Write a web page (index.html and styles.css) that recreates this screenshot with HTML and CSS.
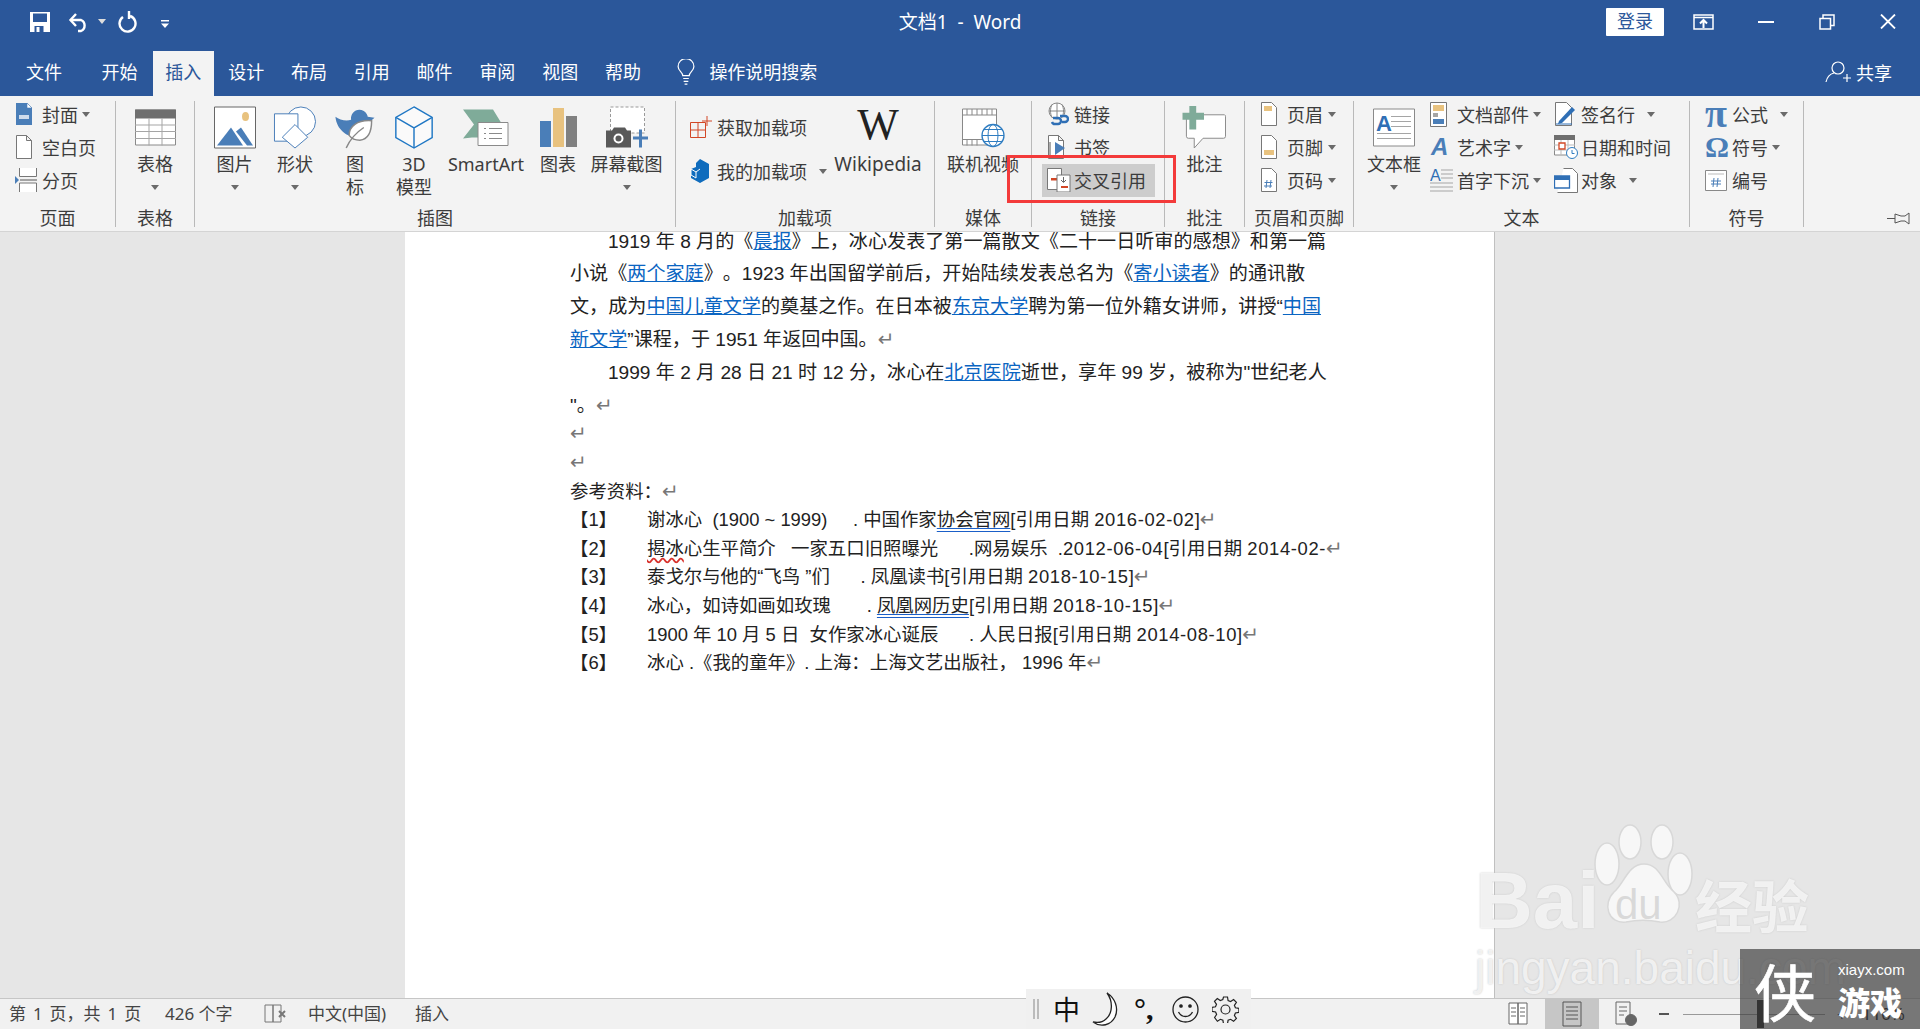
FILE: index.html
```html
<!DOCTYPE html>
<html lang="zh-CN">
<head>
<meta charset="utf-8">
<title>文档1 - Word</title>
<link rel="stylesheet" href="styles.css">
</head>
<body>
<div class="app">
  <header class="titlebar">
    <div class="qat">
      <svg class="q-save" width="20" height="20" viewBox="0 0 20 20"><path d="M0 0h20v20H0z" fill="#fff"/><path d="M3 1.500h14v8.500H3z" fill="#2b579a"/><path d="M4.500 14h9v6h-9z" fill="#2b579a"/><path d="M6.500 15h3v5h-3z" fill="#fff"/></svg>
      <svg class="q-undo" width="22" height="22" viewBox="0 0 22 22" fill="none" stroke="#fff" stroke-width="2.400"><path d="M3 9h10a6 6 0 0 1 0 11h-3"/><path d="M8 3 2.500 9 8 15"/></svg>
      <span class="caret-w q-c1"></span>
      <svg class="q-redo" width="20" height="22" viewBox="0 0 20 22" fill="none" stroke="#fff" stroke-width="2.400"><path d="M12 5a8 8 0 1 1-7 1"/><path d="M11 0v8"/></svg>
      <svg class="q-more" width="9" height="9" viewBox="0 0 9 9" fill="#fff"><path d="M0 0h8v1.500H0zM0 3.500h8L4 8z"/></svg>
    </div>
    <div class="doc-title">文档1&nbsp;&nbsp;-&nbsp;&nbsp;Word</div>
    <div class="winctl">
      <span class="login">登录</span>
      <svg class="w-opt" width="21" height="16" viewBox="0 0 21 16" fill="none" stroke="#fff" stroke-width="1.500"><path d="M1 1h19v14H1zM1 3.500h19"/><path d="M10.500 14V7M7 9.500l3.500-3.500 3.500 3.500" stroke-width="2"/></svg>
      <svg class="w-min" width="16" height="2" viewBox="0 0 16 2"><path d="M0 0h16v2H0z" fill="#fff"/></svg>
      <svg class="w-max" width="16" height="16" viewBox="0 0 16 16" fill="none" stroke="#fff" stroke-width="1.500"><path d="M1 4.500h10.500V15H1zM4 4V1h11v10.500h-3.500"/></svg>
      <svg class="w-close" width="16" height="15" viewBox="0 0 16 15" fill="none" stroke="#fff" stroke-width="1.800"><path d="M1 .5l14 14M15 .5l-14 14"/></svg>
    </div>
  </header>

  <nav class="tabs">
    <span class="tab tab-file">文件</span>
    <span class="tab">开始</span>
    <span class="tab tab-on">插入</span>
    <span class="tab">设计</span>
    <span class="tab">布局</span>
    <span class="tab">引用</span>
    <span class="tab">邮件</span>
    <span class="tab">审阅</span>
    <span class="tab">视图</span>
    <span class="tab">帮助</span>
    <span class="tell">
      <svg width="18" height="26" viewBox="0 0 19 28" fill="none" stroke="#fff" stroke-width="1.300"><path d="M6 18c0-4-5-5-5-10a8.500 8.500 0 0 1 17 0c0 5-5 6-5 10z"/><path d="M6.500 21h6M7 24h5M8 27h3"/></svg>
      操作说明搜索
    </span>
    <span class="share">
      <svg width="28" height="22" viewBox="0 0 28 22" fill="none" stroke="#fff" stroke-width="1.200"><circle cx="13" cy="7" r="6"/><path d="M1 21c1-5 4-8 8-9M22 13v8M18 17h8"/></svg>
      共享
    </span>
  </nav>

  <section class="ribbon">
    <div class="group g-page">
      <div class="body stack">
        <div class="small"><span class="ic"><svg width="18" height="22" viewBox="0 0 18 22"><path d="M1 0h11l5 5v17H1z" fill="#4a7eb8"/><path d="M12 0v5h5z" fill="#fff" stroke="#4a7eb8" stroke-width=".6"/><path d="M4 12h10v4H4z" fill="#cfdcec"/></svg></span>封面<i class="caret c4"></i></div>
        <div class="small"><span class="ic"><svg width="18" height="24" viewBox="0 0 18 24" fill="#fff" stroke="#777"><path d="M1.500 .5h10l5 5v18h-15zM11.500 .5v5h5"/></svg></span>空白页</div>
        <div class="small"><span class="ic"><svg width="24" height="24" viewBox="0 0 24 24"><path d="M4.500 0v8.500h17V0M4.500 24v-9h17V24" fill="#fff" stroke="#777"/><path d="M0 8l4 4-4 4z" fill="#4a7eb8"/><path d="M5 12h17" stroke="#555"/></svg></span>分页</div>
      </div>
      <div class="glabel">页面</div>
    </div>
    <span class="sep"></span>

    <div class="group g-table">
      <div class="body row">
        <div class="big w-full">
          <svg class="bi" width="41" height="36" viewBox="0 0 41 36"><path d="M.5.500h40v35H.5z" fill="#fff" stroke="#8a8a8a"/><path d="M0 0h41v9H0z" fill="#6e6e6e"/><path d="M0 15.500h41M0 22h41M0 29h41M14 9v27M27 9v27" stroke="#a5a5a5"/></svg>
          <span class="bl">表格</span><i class="caret"></i>
        </div>
      </div>
      <div class="glabel">表格</div>
    </div>
    <span class="sep"></span>

    <div class="group g-illus">
      <div class="body row">
        <div class="big b59">
          <svg class="bi" width="42" height="42" viewBox="0 0 42 42"><path d="M.5.500h41v41H.5z" fill="#fff" stroke="#666"/><ellipse cx="31.500" cy="10" rx="3.500" ry="4.500" fill="#e8c27f"/><path d="M3 39 17 21l12 18z" fill="#4a7eb8"/><path d="M22 25l5-4 12 18H33z" fill="#4a7eb8"/></svg>
          <span class="bl">图片</span><i class="caret"></i>
        </div>
        <div class="big b62">
          <svg class="bi" width="44" height="44" viewBox="0 0 44 44" fill="#fff" stroke="#4a7eb8"><circle cx="28" cy="16" r="15"/><path d="M1 8h24v28H1z"/><path d="M22 19l13 13-13 11L9 32z"/></svg>
          <span class="bl">形状</span><i class="caret"></i>
        </div>
        <div class="big b58">
          <svg class="bi" width="42" height="44" viewBox="0 0 42 44"><path d="M17 14c-1-7 6-13 13-9 3 2 4 5 4 6l7 1-7 6c0 8-5 14-11 14-10 0-21-8-22-21 4 3 11 5 16 3z" fill="#4a7eb8"/><path d="M15 30c0-9 8-16 23-15 0 12-4 19-12 20-4 0-8-1-11-5z" fill="#fff" stroke="#888" stroke-width="1.500"/><path d="M12 43c3-7 9-15 18-21" fill="none" stroke="#888" stroke-width="1.500"/></svg>
          <span class="bl">图<br>标</span>
        </div>
        <div class="big b60">
          <svg class="bi" width="40" height="45" viewBox="0 0 40 45" fill="#fafafa" stroke="#1f77c4" stroke-width="1.500"><path d="M20 1 39 12v21L20 44 1 33V12z"/><path d="M1 12l19 11 19-11M20 23v21"/></svg>
          <span class="bl">3D<br>模型</span>
        </div>
        <div class="big b84">
          <svg class="bi" width="46" height="38" viewBox="0 0 46 38"><path d="M0 1h30l8 13v15H9l-9 1 11-14z" fill="#7fab99"/><path d="M15 18h30v23H15z" transform="translate(0 -4)" fill="#fff" stroke="#8a8a8a"/><path d="M21 20h2M26 20h13M21 25h2M26 25h13M21 30h2M26 30h13" stroke="#8a8a8a"/></svg>
          <span class="bl">SmartArt</span>
        </div>
        <div class="big b60">
          <svg class="bi" width="37" height="39" viewBox="0 0 37 39"><path d="M0 13h11v26H0z" fill="#4a7eb8"/><path d="M13 0h11v39H13z" fill="#e8c27f"/><path d="M26 8h11v31H26z" fill="#808080"/></svg>
          <span class="bl">图表</span>
        </div>
        <div class="big b77">
          <svg class="bi" width="42" height="42" viewBox="0 0 42 42"><path d="M4.500 .5h34v26h-34z" fill="#fff" stroke="#999" stroke-dasharray="3 2"/><path d="M0 24h6l2-3h11l2 3h4v17H0z" fill="#595959"/><circle cx="12.500" cy="32" r="5" fill="#fff"/><circle cx="12.500" cy="32" r="3" fill="#595959"/><path d="M33 23h3v7h6v3h-6v8h-3v-8h-6v-3h6z" fill="#4a7eb8"/></svg>
          <span class="bl">屏幕截图</span><i class="caret"></i>
        </div>
      </div>
      <div class="glabel">插图</div>
    </div>
    <span class="sep"></span>

    <div class="group g-addin">
      <div class="body row">
        <div class="addin-col">
          <div class="small tall"><span class="ic"><svg width="22" height="22" viewBox="0 0 22 22" fill="none" stroke="#d24726"><path d="M.5 6.500h15v15H.5zM8 6.500v15M.5 14h15"/><path d="M17 0v10M12 5h10"/></svg></span>获取加载项</div>
          <div class="small tall"><span class="ic"><svg width="20" height="25" viewBox="0 0 20 25"><path d="M10 0l9 5v14l-9 5-9-5v-9l5-2V4z" fill="#0f6cbd"/><path d="M1 10l5 3v6l-5-3zM6 13l4-3" stroke="#fff" fill="none"/></svg></span>我的加载项<i class="caret c12"></i></div>
        </div>
        <div class="big b84 wiki">
          <span class="wiki-w">W</span>
          <span class="bl">Wikipedia</span>
        </div>
      </div>
      <div class="glabel">加载项</div>
    </div>
    <span class="sep"></span>

    <div class="group g-media">
      <div class="body row">
        <div class="big w-full">
          <svg class="bi" width="43" height="38" viewBox="0 0 43 38"><path d="M.5.500h34v36H.5z" fill="#fff" stroke="#888"/><path d="M.5 6.500h34M.5 31h34M5 .5v6M10 .5v6M15 .5v6M20 .5v6M25 .5v6M30 .5v6M5 31v6M10 31v6M15 31v6" stroke="#888"/><circle cx="31" cy="27" r="11" fill="#fff" stroke="#2f7dc1" stroke-width="1.300"/><ellipse cx="31" cy="27" rx="5" ry="11" fill="none" stroke="#2f7dc1"/><path d="M20 27h22M22 21h18M22 33h18" stroke="#2f7dc1"/></svg>
          <span class="bl">联机视频</span>
        </div>
      </div>
      <div class="glabel">媒体</div>
    </div>
    <span class="sep"></span>

    <div class="group g-links">
      <div class="body stack">
        <div class="small"><span class="ic"><svg width="22" height="24" viewBox="0 0 22 24"><circle cx="10" cy="9" r="8" fill="#fff" stroke="#888"/><path d="M2 9h16M10 1v16M5 2.500c-2 4-2 9 0 13M15 2.500c2 4 2 9 0 13" stroke="#888" fill="none"/><path d="M6 16h5a3 3 0 0 1 0 6H8a3 3 0 0 1-3-2M13 14h5a3 3 0 0 1 0 6h-3" fill="none" stroke="#2f6fb5" stroke-width="2.400"/></svg></span>链接</div>
        <div class="small"><span class="ic"><svg width="20" height="24" viewBox="0 0 20 24"><path d="M1.500 .5h10l5 5v18h-15zM11.500 .5v5h5" fill="#fff" stroke="#777"/><path d="M8 7l10 6-10 7z" fill="#4a7eb8"/><path d="M3 7v13" stroke="#555"/></svg></span>书签</div>
        <div class="small small-on"><span class="ic"><svg width="24" height="24" viewBox="0 0 24 24"><path d="M.5.500h14v21H.5z" fill="#fff" stroke="#777"/><path d="M4 10h7v2.500H4z" fill="#d24726"/><path d="M10 7h13v17H10z" fill="#fff" stroke="#777"/><path d="M16.500 9v5M14 12l2.500 2.500L19 12" fill="none" stroke="#666"/><path d="M14 18h7v2h-7z" fill="#d24726"/></svg></span>交叉引用</div>
      </div>
      <div class="glabel">链接</div>
    </div>
    <span class="sep"></span>

    <div class="group g-comment">
      <div class="body row">
        <div class="big w-full">
          <svg class="bi comment-ic" width="45" height="44" viewBox="0 0 45 44"><path d="M6 9h37a2 2 0 0 1 1 2v20a2 2 0 0 1-2 2H21l-9 10v-10H6a2 2 0 0 1-2-2V11z" fill="#fff" stroke="#8a8a8a"/><path d="M7 0h7v7h8v7h-8v10H7V14H0V7h7z" fill="#7fab99"/></svg>
          <span class="bl">批注</span>
        </div>
      </div>
      <div class="glabel">批注</div>
    </div>
    <span class="sep"></span>

    <div class="group g-hf">
      <div class="body stack">
        <div class="small"><span class="ic"><svg width="18" height="24" viewBox="0 0 18 24"><path d="M1.500 .5h10l5 5v18h-15z" fill="#fff" stroke="#777"/><path d="M4 4h8v5H4z" fill="#e8c27f"/></svg></span>页眉<i class="caret c5"></i></div>
        <div class="small"><span class="ic"><svg width="18" height="24" viewBox="0 0 18 24"><path d="M1.500 .5h10l5 5v18h-15z" fill="#fff" stroke="#777"/><path d="M4 15h10v5H4z" fill="#e8c27f"/></svg></span>页脚<i class="caret c5"></i></div>
        <div class="small"><span class="ic"><svg width="18" height="24" viewBox="0 0 18 24"><path d="M1.500 .5h10l5 5v18h-15z" fill="#fff" stroke="#777"/><path d="M7 12l-1 8M11 12l-1 8M4.500 14.500h8M4 18h8" stroke="#4a7eb8"/></svg></span>页码<i class="caret c5"></i></div>
      </div>
      <div class="glabel">页眉和页脚</div>
    </div>
    <span class="sep"></span>

    <div class="group g-text">
      <div class="body row">
        <div class="big b72">
          <svg class="bi" width="42" height="38" viewBox="0 0 42 38"><path d="M.5.500h41v37H.5z" fill="#fff" stroke="#8a8a8a"/><text x="3" y="22" class="ic-letter">A</text><path d="M18 8h20M18 13h20M18 18h20M4 25h34M4 30h34" stroke="#a5a5a5"/></svg>
          <span class="bl">文本框</span><i class="caret"></i>
        </div>
        <div class="col-2">
          <div class="small nopad"><span class="ic"><svg width="18" height="25" viewBox="0 0 18 25"><path d="M.5.500h16v24H.5z" fill="#fff" stroke="#777"/><path d="M3 3h11v6H3z" fill="#e8c27f"/><path d="M3 11h5v4H3z" fill="#a5a5a5"/><path d="M3 17h11v5H3z" fill="#4a7eb8"/></svg></span>文档部件<i class="caret c4"></i></div>
          <div class="small nopad"><span class="ic"><svg width="18" height="24" viewBox="0 0 18 24"><text x="1" y="20" class="ic-a">A</text></svg></span>艺术字<i class="caret c4"></i></div>
          <div class="small nopad"><span class="ic ic-drop"><svg width="24" height="24" viewBox="0 0 24 24"><text x="0" y="13" class="ic-b">A</text><path d="M11 2h12M11 6h12M11 10h12M0 15h23M0 19h23M0 23h23" stroke="#a5a5a5"/></svg></span>首字下沉<i class="caret c4"></i></div>
        </div>
        <div class="col-3">
          <div class="small nopad"><span class="ic"><svg width="22" height="24" viewBox="0 0 22 24"><path d="M1.500 .5h11l5 5v18h-16z" fill="#fff" stroke="#777"/><path d="M5 19 18 5l3 3L8 21l-4 1z" fill="#2f6fb5"/><path d="M2 22h16" stroke="#2f6fb5"/></svg></span>签名行<i class="caret c12"></i></div>
          <div class="small nopad"><span class="ic"><svg width="24" height="24" viewBox="0 0 24 24"><path d="M.5 1h20v19H.5z" fill="#fff" stroke="#8a8a8a"/><path d="M0 0h21v5H0z" fill="#6e6e6e"/><path d="M7 5v15M14 5v15M0 10h21M0 15h21" stroke="#bbb"/><path d="M5 8h6v6H5z" fill="#fff" stroke="#d24726" stroke-width="1.300"/><circle cx="18" cy="18" r="5.500" fill="#fff" stroke="#2f7dc1"/><path d="M18 15v3.500h2.500" fill="none" stroke="#2f7dc1"/></svg></span>日期和时间</div>
          <div class="small nopad"><span class="ic"><svg width="24" height="25" viewBox="0 0 24 25"><path d="M9.500 .5h9l5 5v19h-20" fill="#fff" stroke="#777"/><path d="M.5 8h15v12H.5z" fill="#fff" stroke="#2f6fb5" stroke-width="1.300"/><path d="M0 8h16v4H0z" fill="#2f6fb5"/></svg></span>对象<i class="caret c12"></i></div>
        </div>
      </div>
      <div class="glabel">文本</div>
    </div>
    <span class="sep"></span>

    <div class="group g-sym">
      <div class="body stack">
        <div class="small"><span class="ic sym sym-pi">π</span>公式<i class="caret c12"></i></div>
        <div class="small"><span class="ic sym">Ω</span>符号<i class="caret c4"></i></div>
        <div class="small"><span class="ic"><svg width="22" height="21" viewBox="0 0 22 21"><path d="M.5.500h21v20H.5z" fill="#fff" stroke="#888"/><path d="M3 4h16" stroke="#bbb"/><path d="M9 8l-1 9M13 8l-1 9M6 11h10M6 14h10" stroke="#4a7eb8"/></svg></span>编号</div>
      </div>
      <div class="glabel">符号</div>
    </div>
    <span class="sep"></span>

    <div class="pin-cell">
      <svg width="23" height="15" viewBox="0 0 23 15" fill="none" stroke="#555"><path d="M0 7.500h8M8 3l6 2h4l4-3v11l-4-3h-4l-6 2z"/></svg>
    </div>
  </section>

  <main class="workspace">
    <article class="page">
      <div class="body-text">
        <div class="pline indent">1919 年 8 月的《<a class="lnk">晨报</a>》上，冰心发表了第一篇散文《二十一日听审的感想》和第一篇</div>
        <div class="pline">小说《<a class="lnk">两个家庭</a>》。1923 年出国留学前后，开始陆续发表总名为《<a class="lnk">寄小读者</a>》的通讯散</div>
        <div class="pline">文，成为<a class="lnk">中国儿童文学</a>的奠基之作。在日本被<a class="lnk">东京大学</a>聘为第一位外籍女讲师，讲授“<a class="lnk">中国</a></div>
        <div class="pline"><a class="lnk">新文学</a>”课程，于 1951 年返回中国。<span class="pm">↵</span></div>
        <div class="pline indent">1999 年 2 月 28 日 21 时 12 分，冰心在<a class="lnk">北京医院</a>逝世，享年 99 岁，被称为"世纪老人</div>
        <div class="pline">"。<span class="pm">↵</span></div>
      </div>
      <div class="refs">
        <div class="rline"><span class="pm">↵</span></div>
        <div class="rline"><span class="pm">↵</span></div>
        <div class="rline">参考资料：<span class="pm">↵</span></div>
        <div class="ref"><span class="rn">【1】</span><span class="rt">谢冰心  (1900 ~ 1999)     . 中国作家<u class="dbl">协会官网</u>[引用日期 <span class="num">2016-02-02</span>]<span class="pm">↵</span></span></div>
        <div class="ref"><span class="rn">【2】</span><span class="rt"><u class="wavy">揭冰</u>心生平简介   一家五口旧照曝光      .网易娱乐  .<span class="num">2012-06-04</span>[引用日期 <span class="num">2014-02-</span><span class="pm">↵</span></span></div>
        <div class="ref"><span class="rn">【3】</span><span class="rt">泰戈尔与他的“飞鸟 ”们      . 凤凰读书[引用日期 <span class="num">2018-10-15</span>]<span class="pm">↵</span></span></div>
        <div class="ref"><span class="rn">【4】</span><span class="rt">冰心，如诗如画如玫瑰       . <u class="dbl">凤凰网历史</u>[引用日期 <span class="num">2018-10-15</span>]<span class="pm">↵</span></span></div>
        <div class="ref"><span class="rn">【5】</span><span class="rt">1900 年 10 月 5 日  女作家冰心诞辰      . 人民日报[引用日期 <span class="num">2014-08-10</span>]<span class="pm">↵</span></span></div>
        <div class="ref"><span class="rn">【6】</span><span class="rt">冰心 .《我的童年》. 上海：上海文艺出版社， 1996 年<span class="pm">↵</span></span></div>
      </div>
    </article>
  </main>

  <footer class="status">
    <span class="st st-page">第 1 页，共 1 页</span>
    <span class="st st-words">426 个字</span>
    <svg class="st-proof" width="22" height="20" viewBox="0 0 22 20" fill="none" stroke="#777"><path d="M1 1h8v17H1zM9 1h8v17H9z"/><path d="M15 7l6 6M21 7l-6 6" stroke-width="2"/></svg>
    <span class="st st-lang">中文(中国)</span>
    <span class="st st-ins">插入</span>
    <span class="st-views">
      <span class="vbtn"><svg width="20" height="26" viewBox="0 0 20 26" fill="#fff" stroke="#666"><path d="M1 2h9v21H1zM10 2h9v21h-9z"/><path d="M3 7h5M3 11h5M3 15h5M12 7h5M12 11h5M12 15h5" fill="none"/></svg></span>
      <span class="vbtn von"><svg width="20" height="26" viewBox="0 0 20 26" fill="none" stroke="#555"><path d="M1 1h18v24H1zM4 6h12M4 10h12M4 14h12M4 18h12"/></svg></span>
      <span class="vbtn"><svg width="22" height="26" viewBox="0 0 22 26" fill="none" stroke="#666"><path d="M1 1h14v22H1zM4 6h8M4 10h8M4 14h5"/><circle cx="16" cy="19" r="5.500" fill="#666"/></svg></span>
    </span>
    <span class="zoom-minus"></span>
    <span class="slider"><i class="thumb"></i></span>
    <span class="zoom-plus">+</span>
    <span class="st st-pct">110%</span>
  </footer>
</div>

<div class="ime">
  <span class="ime-grip"></span>
  <span class="ime-zh">中</span>
  <svg width="26" height="34" viewBox="0 0 26 34" fill="#fff" stroke="#222" stroke-width="1.300"><path d="M15 1c6 8 6 20-1 26-3 3-8 4-13 3 8 6 18 3 22-5 4-9 0-19-8-24z"/></svg>
  <span class="ime-punc">°,</span>
  <svg width="27" height="27" viewBox="0 0 27 27" fill="none" stroke="#222" stroke-width="1.300"><circle cx="13.500" cy="13.500" r="12.500"/><circle cx="9" cy="10" r="1.200" fill="#222"/><circle cx="18" cy="10" r="1.200" fill="#222"/><path d="M6.500 16c3 6 11 6 14 0"/></svg>
  <svg width="27" height="27" viewBox="0 0 27 27" fill="none" stroke="#222" stroke-width="1.200"><circle cx="13.500" cy="13.500" r="4.500"/><path d="M11.500 1h4l.6 3.500 2.500 1 3-2 2.800 2.800-2 3 1 2.500 3.500.6v4l-3.500.6-1 2.500 2 3-2.800 2.800-3-2-2.500 1-.6 3.500h-4l-.6-3.500-2.500-1-3 2L2.600 21.500l2-3-1-2.500L0 15.400v-4l3.500-.6 1-2.500-2-3 2.800-2.800 3 2 2.500-1z"/></svg>
</div>

<div class="mark-red"></div>

<div class="baidu">
  <span class="bd-bai">Bai</span>
  <svg class="bd-paw" width="108" height="108" viewBox="0 0 108 108" fill="#f7f7f7" stroke="#d8d8d8" stroke-width="1.500"><ellipse cx="40" cy="18" rx="11" ry="17"/><ellipse cx="72" cy="18" rx="11" ry="17"/><ellipse cx="17" cy="40" rx="12" ry="21"/><ellipse cx="90" cy="50" rx="12" ry="21"/><path d="M54 40c16 0 18 18 30 28 12 12 2 32-14 30-10-2-24-2-34 0-18 2-24-18-12-30 10-8 14-28 30-28z"/></svg>
  <span class="bd-du">du</span>
  <span class="bd-cn">经验</span>
  <span class="bd-url">jingyan.baidu.com</span>
</div>

<div class="xia">
  <span class="xia-big">侠</span>
  <span class="xia-url">xiayx.com</span>
  <span class="xia-cn">游戏</span>
</div>
</body>
</html>
```

FILE: styles.css
```css
* { box-sizing: border-box; }
html { height: 1029px; overflow: hidden; text-spacing-trim: space-all; }
body {
  margin: 0;
  position: relative;
  width: 1920px;
  height: 1029px;
  overflow: hidden;
  font-family: "Noto Sans", "Noto Sans CJK SC", sans-serif;
  font-size: 18px;
  color: #3c3c3c;
  background: #e6e6e6;
}
.app { display: flex; flex-direction: column; height: 1029px; }

/* title bar */
.titlebar {
  height: 51px;
  flex: none;
  background: #2b579a;
  color: #fff;
  display: grid;
  grid-template-columns: 1fr auto 1fr;
  padding-bottom: 8px;
  align-items: center;
}
.qat { display: flex; align-items: center; padding-left: 30px; }
.q-undo { margin-left: 18px; }
.q-c1 { margin-left: 8px; }
.q-redo { margin-left: 12px; }
.q-more { margin-left: 23px; margin-top: 6px; }
.caret-w { width: 0; height: 0; border: 4px solid transparent; border-top: 5px solid #ddd; border-bottom: 0; }
.doc-title { font-size: 19px; line-height: 30px; }
.winctl { display: flex; align-items: center; justify-content: flex-end; }
.login {
  width: 58px; height: 28px; line-height: 26px; text-align: center;
  background: #fff; color: #2b579a; border-radius: 1px;
}
.w-opt { margin-left: 29px; }
.w-min { margin-left: 44px; }
.w-max { margin-left: 45px; }
.w-close { margin-left: 45px; margin-right: 24px; }

/* tabs */
.tabs {
  height: 45px; flex: none;
  background: #2b579a; color: #fff;
  display: flex; align-items: stretch;
}
.tab { width: 62.800px; text-align: center; line-height: 42px; }
.tab-file { width: 88px; text-align: left; padding-left: 26px; }
.tab-on { background: #f3f3f3; color: #2b579a; width: 61px; margin-left: 2px; margin-right: 1px; }
.tell { display: flex; align-items: center; gap: 14px; margin-left: 23px; line-height: 42px; padding-bottom: 3px; }
.share { display: flex; align-items: center; gap: 3px; margin-left: auto; margin-right: 28px; padding-bottom: 3px; }

/* ribbon */
.ribbon {
  height: 136px; flex: none;
  background: #f3f3f3;
  border-bottom: 1px solid #d4d4d4;
  display: flex;
}
.group { flex: none; display: flex; flex-direction: column; }
.sep { flex: none; width: 1px; margin: 5px 0 4px; background: #b9b9b9; }
.body { height: 111px; flex: none; }
.stack { padding-top: 1.500px; }
.row { display: flex; }
.glabel { height: 24px; line-height: 22px; text-align: center; white-space: nowrap; }
.g-page { width: 115px; }
.g-table { width: 78px; }
.g-illus { width: 480px; }
.g-illus .row { padding-left: 10px; }
.g-addin { width: 258px; }
.g-media { width: 96px; }
.g-links { width: 132px; }
.g-comment { width: 79px; }
.g-hf { width: 108px; }
.g-text { width: 335px; }
.g-text .row { padding-left: 4px; }
.g-sym { width: 113px; }
.pin-cell { flex: 1; display: flex; justify-content: flex-end; align-items: flex-end; padding: 0 10px 5px 0; }

.big { display: flex; flex-direction: column; align-items: center; padding-top: 10px; text-align: center; flex: none; }
.bi { height: 43px; flex: none; }
.bl { display: block; margin-top: 4px; line-height: 23px; white-space: nowrap; }
.w-full { width: 100%; }
.b58 { width: 58px; } .b59 { width: 59px; } .b60 { width: 60px; } .b62 { width: 62px; }
.b72 { width: 72px; } .b77 { width: 77px; } .b84 { width: 84px; }
.caret { display: block; width: 0; height: 0; border: 4.500px solid transparent; border-top: 5px solid #6a6a6a; border-bottom: 0; }
.big .caret { margin-top: 9px; }
.small .caret { margin-top: 1px; }
.c4 { margin-left: 4px; }
.c5 { margin-left: 5px; }
.c12 { margin-left: 12px; }

.small { display: flex; align-items: center; height: 33px; padding-left: 15px; white-space: nowrap; }
.small.nopad { padding-left: 0; }
.ic { width: 27px; flex: none; display: flex; align-items: center; }
.ic svg { display: block; }
.tall { height: 44px; padding-left: 14px; }
.addin-col { width: 160px; padding-top: 9px; }
.wiki .wiki-w {
  height: 43px; line-height: 38px;
  font-family: "Liberation Serif", serif; font-size: 44px; color: #222;
}
.wiki .bl { font-size: 19px; }
.small-on { position: relative; z-index: 0; }
.small-on::before {
  content: ""; position: absolute; left: 10px; top: 0; width: 113px; height: 33px;
  background: #cdcdcd; z-index: -1;
}
.col-2 { width: 124px; padding-top: 1.500px; }
.col-3 { width: 130px; padding-top: 1.500px; }
.ic-letter { font: 700 22px "Liberation Sans", sans-serif; fill: #2f6fb5; }
.ic-a { font: italic 700 24px "Liberation Sans", sans-serif; fill: #4a7eb8; }
.ic-b { font: 400 16px "Liberation Sans", sans-serif; fill: #2f6fb5; }
.sym { font-family: "Liberation Serif", serif; font-size: 30px; font-weight: 700; color: #4a7eb8; line-height: 30px; }
.sym-pi { font-size: 40px; }

/* document */
.workspace {
  flex: 1; min-height: 0; overflow: hidden;
  background: #e6e6e6;
  padding-left: 405px;
}
.page {
  display: flow-root;
  width: 1090px; height: 100%;
  background: #fff;
  border-right: 1px solid #c0c0c0;
  padding-left: 165px;
  font-family: "Liberation Sans", "Noto Sans CJK SC", sans-serif;
  font-size: 19.100px;
  color: #222;
}
.body-text { margin-top: -6.400px; }
.pline { height: 32.800px; line-height: 32.800px; white-space: pre; }
.indent { padding-left: 38px; }
.lnk { color: #0b65c2; text-decoration: underline; }
.pm { color: #777; font-family: "DejaVu Sans", sans-serif; font-size: 20px; line-height: 20px; }
.refs { font-size: 18.400px; margin-top: -2px; }
.rline, .ref { height: 28.600px; line-height: 28.600px; white-space: pre; }
.ref { display: flex; }
.rn { width: 77px; flex: none; }
.rt { flex: none; }
.num { letter-spacing: .65px; }
.dbl { text-decoration: underline double #1a5fc8; text-underline-offset: 2px; }
.wavy { text-decoration: underline wavy #d8322c; text-underline-offset: 2px; }

/* status */
.status {
  height: 31px; flex: none;
  background: #f1f1f1;
  border-top: 1px solid #c6c6c6;
  display: flex; align-items: center;
  font-size: 17px; color: #444;
}
.st { white-space: nowrap; line-height: 28px; }
.st-page { margin-left: 9px; width: 156px; word-spacing: 2.500px; }
.st-words { width: 99px; }
.st-proof { flex: none; }
.st-lang { margin-left: 22px; width: 107px; }
.st-ins { width: 60px; }
.st-views { display: flex; margin-left: auto; height: 30px; margin-right: -4px; }
.vbtn { width: 54px; display: flex; align-items: center; justify-content: center; }
.von { background: #c6c6c6; }
.zoom-minus { width: 10px; height: 2px; background: #555; margin-left: 10px; }
.slider { width: 142px; height: 1px; background: #999; margin-left: 14px; position: relative; }
.thumb { position: absolute; left: 74px; top: -14px; width: 7px; height: 28px; background: #222; }
.zoom-plus { margin-left: 12px; }
.st-pct { margin: 0 15px 0 15px; color: #111; }

/* red annotation */
.mark-red {
  position: absolute; left: 1007px; top: 155px;
  width: 169px; height: 48px;
  border: 3px solid #f33a3a;
}

/* IME bar */
.ime {
  position: absolute; left: 1026px; top: 989px;
  width: 225px; height: 40px;
  background: #f0f0f0;
  display: flex; align-items: center;
  padding-left: 7px; color: #111;
}
.ime-grip { width: 6px; height: 20px; border-left: 2px solid #bbb; border-right: 2px solid #bbb; }
.ime-zh { font-size: 27px; font-family: "Noto Sans CJK SC", sans-serif; margin-left: 14px; line-height: 40px; }
.ime > svg:nth-of-type(1) { margin-left: 12px; }
.ime-punc { font-family: "Liberation Serif", serif; font-size: 30px; font-weight: 700; margin-left: 16px; width: 26px; line-height: 28px; }
.ime > svg:nth-of-type(2) { margin-left: 12px; }
.ime > svg:nth-of-type(3) { margin-left: 13px; }

/* Baidu watermark */
.baidu { position: absolute; left: 1470px; top: 820px; width: 350px; height: 175px; pointer-events: none; }
.baidu span { position: absolute; white-space: nowrap; color: rgba(248,248,248,.85); }
.bd-bai { left: 5px; top: 36px; font: 700 80px/90px "Liberation Sans", sans-serif; text-shadow: 0 0 2px #c8c8c8; }
.bd-paw { position: absolute; left: 120px; top: 4px; }
.baidu .bd-du { left: 145px; top: 60px; font: 400 42px/50px "Liberation Sans", sans-serif; color: rgba(215,215,215,.95); }
.bd-cn { left: 225px; top: 48px; font: 700 57px/70px "Noto Sans CJK SC", sans-serif; text-shadow: 0 0 2px #c8c8c8; }
.bd-url { left: 5px; top: 120px; font: 400 46px/56px "Liberation Sans", sans-serif; text-shadow: 0 0 2px #c4c4c4; }

/* xiayx logo */
.xia {
  position: absolute; left: 1740px; top: 949px;
  width: 180px; height: 80px;
  background: rgba(60,60,60,.68);
  color: #fff;
}
.xia span { position: absolute; white-space: nowrap; }
.xia-big { left: 14px; top: 8px; font: 400 62px/66px "Noto Sans CJK SC", sans-serif; -webkit-text-stroke: .6px #fff; }
.xia-url { left: 98px; top: 9px; font: 400 15px/24px "Liberation Sans", sans-serif; }
.xia-cn { left: 98px; top: 30px; font: 900 32px/44px "Noto Sans CJK SC", sans-serif; }
```
